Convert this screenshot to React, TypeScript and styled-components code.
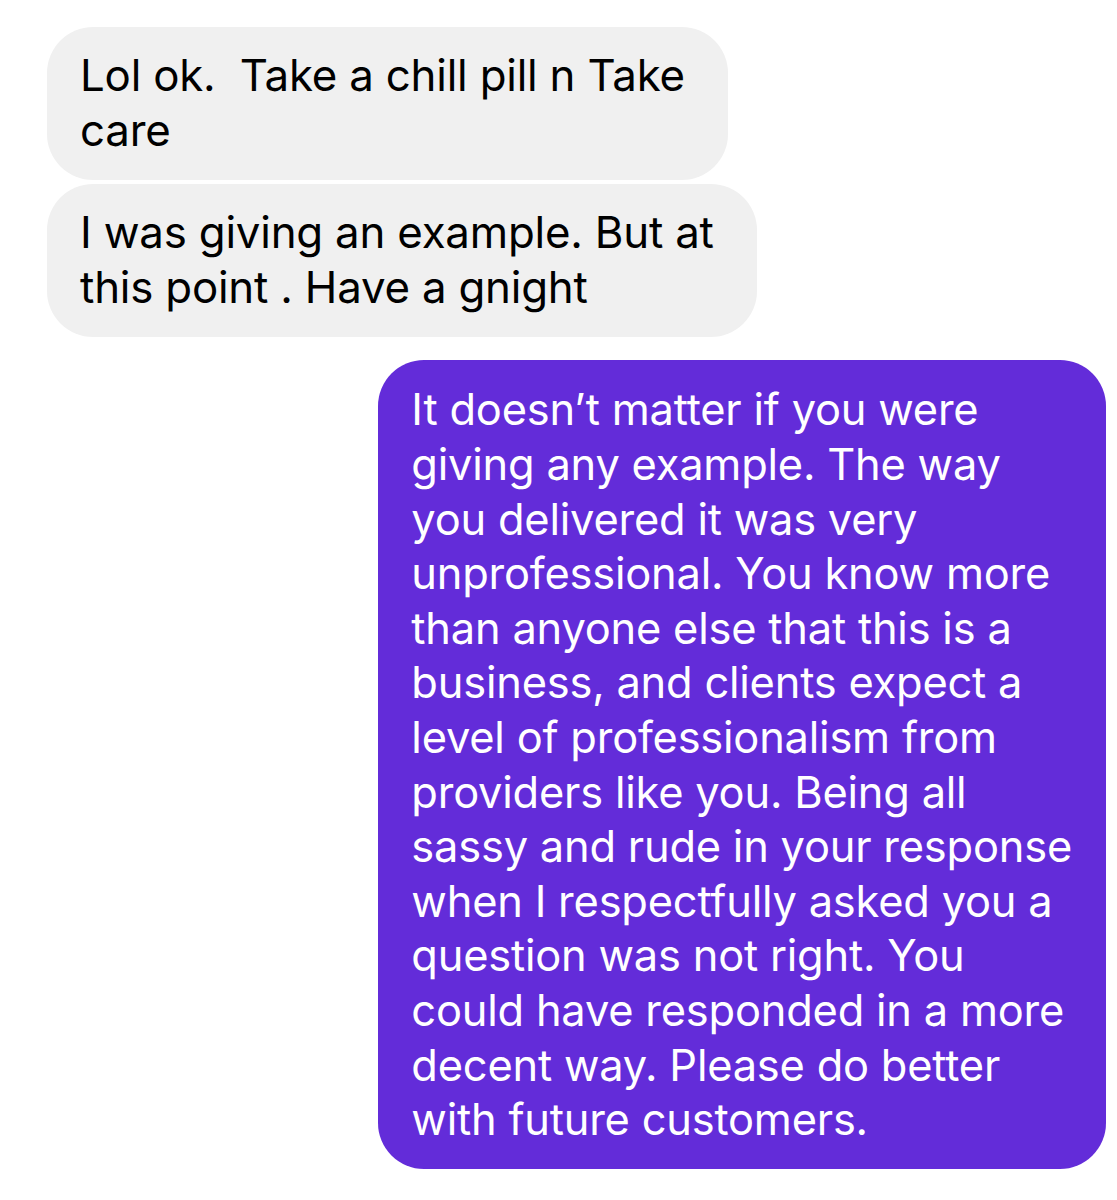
import React from "react";
import styled, { createGlobalStyle } from "styled-components";

const Global = createGlobalStyle`
  html, body { margin: 0; padding: 0; background: #ffffff; }
  body { font-family: Inter, "Noto Sans", "Liberation Sans", sans-serif; }
`;

const Thread = styled.div`
  display: flex;
  flex-direction: column;
  padding: 27px 11px 0 47px;
  width: 1117px;
  box-sizing: border-box;
`;

const Bubble = styled.div<{ $mine?: boolean; $gap?: number }>`
  align-self: ${(p) => (p.$mine ? "flex-end" : "flex-start")};
  background: ${(p) => (p.$mine ? "#632cd9" : "#f0f0f0")};
  color: ${(p) => (p.$mine ? "#ffffff" : "#000000")};
  border-radius: 46px;
  padding: ${(p) => (p.$mine ? "22px 34px 22px 33px" : "22px 43px 22px 33px")};
  margin-top: ${(p) => p.$gap ?? 0}px;
  font-size: ${(p) => (p.$mine ? 43.4 : 43.8)}px;
  line-height: 54.6px;
  letter-spacing: -0.2px;
`;

const Line = styled.span`
  display: block;
  white-space: pre;
`;

const Msg = ({ lines, mine, gap }: { lines: string[]; mine?: boolean; gap?: number }) => (
  <Bubble $mine={mine} $gap={gap}>
    {lines.map((l, i) => (
      <Line key={i}>{l}</Line>
    ))}
  </Bubble>
);

export default function App() {
  return (
    <>
      <Global />
      <Thread>
        <Msg lines={["Lol ok.  Take a chill pill n Take", "care"]} />
        <Msg gap={4} lines={["I was giving an example. But at", "this point . Have a gnight"]} />
        <Msg
          mine
          gap={23}
          lines={[
            "It doesn\u2019t matter if you were",
            "giving any example. The way",
            "you delivered it was very",
            "unprofessional. You know more",
            "than anyone else that this is a",
            "business, and clients expect a",
            "level of professionalism from",
            "providers like you. Being all",
            "sassy and rude in your response",
            "when I respectfully asked you a",
            "question was not right. You",
            "could have responded in a more",
            "decent way. Please do better",
            "with future customers.",
          ]}
        />
      </Thread>
    </>
  );
}
